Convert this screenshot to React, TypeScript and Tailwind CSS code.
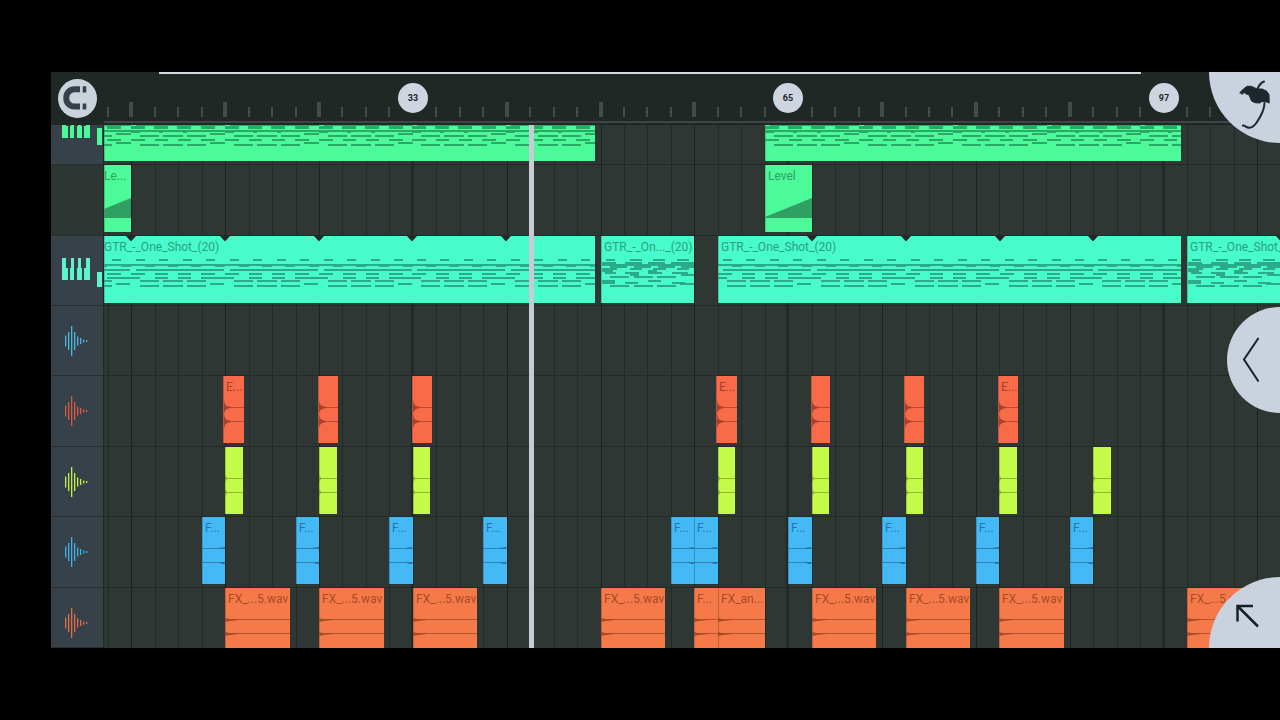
import React from 'react';
import clsx from 'clsx';

type Segment = [x: number, y: number, width: number, height?: number];
type ClipData = { start: number; end: number; label?: string; dense?: boolean };
type TrackKind = 'keys' | 'automation' | 'audio';

type TrackData = {
  name: string;
  kind: TrackKind;
  icon: string;
  clip: string;
  ink: string;
  notes?: Segment[];
  wave?: string;
  meter?: string;
  clips: ClipData[];
};

const BAR_WIDTH = 11.73;
const FIRST_BAR_X = -67;
const LOOP_WIDTH = BAR_WIDTH * 8;
const SONG_END = 115;

const barToX = (bar: number) => Math.ceil(FIRST_BAR_X + (bar - 1) * BAR_WIDTH);

// every second bar, far enough for a very wide window
const GRID_BARS = Array.from({ length: 160 }, (_, i) => 7 + i * 2);

const RISER_NOTES: Segment[] = [
  [5, 30, 89, 2],
  [0, 32, 14, 3],
  [23, 32, 14, 3],
  [46, 32, 14, 3],
  [70, 32, 14, 3],
  [0, 36, 94],
  [0, 38, 9, 1],
  [79, 39, 15],
  [28, 38, 4, 1],
  [52, 38, 4, 1],
  [9, 41, 19],
  [32, 41, 20],
  [56, 41, 19],
  [0, 45, 14],
  [24, 45, 13],
  [47, 45, 13],
  [70, 45, 14],
  [79, 48, 15],
  [9, 50, 19],
  [32, 50, 20],
  [56, 50, 19],
];

const LEAD_NOTES: Segment[] = [
  [5, 23, 9],
  [28, 23, 9],
  [52, 23, 9],
  [75, 23, 9],
  [0, 28, 94],
  [14, 30, 10, 1],
  [37, 30, 10, 1],
  [60, 30, 10, 1],
  [84, 30, 10, 1],
  [5, 33, 88],
  [0, 37, 14],
  [24, 37, 13],
  [47, 37, 13],
  [70, 37, 14],
  [0, 41, 9],
  [24, 41, 13],
  [47, 41, 13],
  [70, 41, 24],
  [9, 44, 19],
  [32, 44, 20],
  [56, 44, 19],
  [79, 47, 14],
  [9, 49, 19],
  [32, 49, 20],
  [56, 49, 19],
];

const DENSE_NOTES: Segment[] = [
  [5, 23, 9],
  [29, 23, 12],
  [52, 23, 12],
  [76, 23, 12],
  [1, 26, 14],
  [24, 26, 17],
  [47, 26, 17],
  [70, 26, 23],
  [1, 28, 93],
  [9, 30, 17],
  [33, 30, 17],
  [57, 30, 17],
  [80, 30, 14],
  [1, 32, 15],
  [29, 32, 12],
  [52, 32, 13],
  [76, 32, 12],
  [1, 34, 11],
  [47, 34, 9],
  [4, 36, 11],
  [24, 36, 14],
  [47, 36, 14],
  [71, 36, 16],
  [29, 38, 9],
  [80, 38, 14],
  [9, 40, 19],
  [33, 40, 19],
  [56, 40, 19],
  [1, 44, 13, 4],
  [47, 44, 13],
  [24, 46, 13],
  [71, 46, 13],
  [79, 47, 15],
  [9, 49, 19],
  [33, 49, 19],
  [56, 49, 19],
];

const every = (bars: number[], length: number, label?: string): ClipData[] =>
  bars.map((start) => ({ start, end: start + length, label }));

const TRACKS: TrackData[] = [
  {
    name: 'Riser',
    kind: 'keys',
    icon: 'text-[#4cfa9a]',
    clip: 'bg-[#4cfa9a]',
    ink: 'text-[#28a061]',
    meter: 'h-[17px]',
    notes: RISER_NOTES,
    clips: [
      { start: 1, end: 48.5 },
      { start: 63, end: 98.5 },
    ],
  },
  {
    name: 'Level',
    kind: 'automation',
    icon: 'text-[#4cfa9a]',
    clip: 'bg-[#4cfa9a]',
    ink: 'text-[#30a062]',
    clips: [
      { start: 5, end: 9, label: 'Le...' },
      { start: 63, end: 67, label: 'Level' },
    ],
  },
  {
    name: 'GTR One Shot',
    kind: 'keys',
    icon: 'text-[#5ff3cc]',
    clip: 'bg-[#47fbcb]',
    ink: 'text-[#29a281]',
    meter: 'h-[15px]',
    notes: LEAD_NOTES,
    clips: [
      { start: 1, end: 48.5, label: 'GTR_-_One_Shot_(20)' },
      { start: 49, end: 57, label: 'GTR_-_On..._(20)', dense: true },
      { start: 59, end: 98.5, label: 'GTR_-_One_Shot_(20)' },
      { start: 99, end: SONG_END, label: 'GTR_-_One_Shot_(20)', dense: true },
    ],
  },
  {
    name: 'Vocal',
    kind: 'audio',
    icon: 'text-[#4cb6da]',
    clip: 'bg-[#43b8f4]',
    ink: 'text-[#1f73a3]',
    clips: [],
  },
  {
    name: 'Crash',
    kind: 'audio',
    icon: 'text-[#dc5740]',
    clip: 'bg-[#f96a49]',
    ink: 'text-[#a3432f]',
    wave: 'M1 24l1 4 2 2 4 1v1l-4 1-2 2-1 3zM1 38l1 4 2 2 4 1v1l-4 1-2 2-1 3z',
    clips: [
      { start: 16.85, end: 18.6, label: 'E...' },
      ...every([24.95, 32.95], 1.65),
      { start: 58.85, end: 60.6, label: 'E...' },
      ...every([66.95, 74.9], 1.65),
      { start: 82.9, end: 84.6, label: 'E...' },
    ],
  },
  {
    name: 'Hit',
    kind: 'audio',
    icon: 'text-[#c0f040]',
    clip: 'bg-[#c3fb48]',
    ink: 'text-[#7fa62d]',
    wave: 'M0 28l2 3v1l-2 3zM0 42l2 3v1l-2 3z',
    clips: every([17, 25, 33, 59, 67, 75, 83, 91], 1.5),
  },
  {
    name: 'Fill',
    kind: 'audio',
    icon: 'text-[#43aee6]',
    clip: 'bg-[#44b9f5]',
    ink: 'text-[#2477a6]',
    wave: 'M16 31l7-1v2h-4zM16 45l7 0v2h-3z',
    clips: every([15, 23, 31, 39, 55, 57, 65, 73, 81, 89], 2, 'F...'),
  },
  {
    name: 'FX',
    kind: 'audio',
    icon: 'text-[#e26a45]',
    clip: 'bg-[#f67a49]',
    ink: 'text-[#a94b26]',
    wave: 'M0 30l4 1h10v1l-9 1-5 1zM0 44l4 1h10v1l-9 1-5 1z',
    clips: [
      ...every([17, 25, 33, 49], 5.5, 'FX_...5.wav'),
      { start: 57, end: 59, label: 'F...' },
      { start: 59, end: 63, label: 'FX_an...' },
      ...every([67, 75, 83, 99], 5.5, 'FX_...5.wav'),
    ],
  },
];

const KeysIcon = () => (
  <svg className="mr-0.5 mb-1" width="28" height="22" viewBox="0 0 28 22" fill="currentColor" shapeRendering="crispEdges">
    <path d="M0 0h4v10h2v12H0zM9 0h3v22H8V10h1zM16 0h3v10h1v12h-5V10h1zM24 0h4v22h-6V10h2z" />
  </svg>
);

const WAVE_BARS = [11, 18, 30, 18, 9, 6, 3, 2];

const WaveIcon = () => (
  <svg width="24" height="30" viewBox="0 0 24 30" fill="currentColor">
    {WAVE_BARS.map((h, i) => (
      <rect key={i} x={i * 3} y={15 - h / 2} width="1.3" height={h} />
    ))}
  </svg>
);

const TrackHeader = ({ track }: { track: TrackData }) => {
  if (track.kind === 'automation') return <div className="h-full bg-[#2e3634]" />;

  return (
    <button
      aria-label={track.name}
      className={clsx('relative flex h-full w-full items-center justify-center bg-[#36414a]', track.icon)}>
      {track.kind === 'keys' ? <KeysIcon /> : <WaveIcon />}
      {track.meter && (
        <span className={clsx('absolute right-px bottom-[19px] w-[5px] bg-current', track.meter)} />
      )}
    </button>
  );
};

const Notes = ({ notes, length, offset }: { notes: Segment[]; length: number; offset: number }) => {
  const loops = Array.from({ length: Math.ceil(length / 8) }, (_, i) => i);
  const loopX = (loop: number) => Math.round(offset + loop * LOOP_WIDTH);
  return (
    <svg className="absolute inset-0 h-full w-full" fill="currentColor">
      {loops.map((loop) => (
        <g key={loop} transform={`translate(${loopX(loop)} 0)`}>
          {notes.map(([x, y, width, height = 2], i) => (
            <rect key={i} x={x} y={y} width={width} height={height} opacity="0.9" />
          ))}
        </g>
      ))}
      {loops.slice(1).map((loop) => (
        <path key={loop} d="M-5 0H5L0.5 5H-0.5Z" fill="#202826" transform={`translate(${loopX(loop)} 0)`} />
      ))}
    </svg>
  );
};

const Ramp = () => (
  <svg className="absolute inset-0 h-full w-full" viewBox="0 0 47 67" preserveAspectRatio="xMaxYMin slice">
    <path d="M0 52L47 33V53H0Z" fill="#2fa062" />
  </svg>
);

const Waveform = ({ shape }: { shape?: string }) => (
  <svg className="absolute inset-0 h-full w-full" fill="currentColor">
    <rect y="31" width="100%" height="1" opacity="0.8" />
    <rect y="45" width="100%" height="1" opacity="0.8" />
    <path d={shape} />
  </svg>
);

const Clip = ({ clip, track }: { clip: ClipData; track: TrackData }) => {
  const start = barToX(clip.start);
  const left = Math.max(start, 0);
  const notes = clip.dense ? DENSE_NOTES : track.notes;

  return (
    <div
      className={clsx(
        'absolute top-0 h-[67px] overflow-hidden shadow-[inset_1px_0_0_rgba(0,0,0,0.2)]',
        track.clip,
        track.ink
      )}
      style={{ left, width: barToX(clip.end) - left }}>
      {notes && <Notes notes={notes} length={clip.end - clip.start} offset={start - left} />}
      {track.kind === 'automation' && <Ramp />}
      {track.kind === 'audio' && <Waveform shape={track.wave} />}
      {clip.label && (
        <span className={clsx('relative block pt-[3px] text-xs leading-4 whitespace-nowrap', start > 0 && 'pl-[3px]')}>
          {clip.label}
        </span>
      )}
    </div>
  );
};

const Ruler = () => (
  <div className="relative h-full flex-1 overflow-hidden">
    {GRID_BARS.map((bar) => {
      const labelled = bar % 32 === 1 && bar < SONG_END;
      return (
        <div
          key={bar}
          className={clsx('absolute flex -translate-x-1/2', labelled ? 'bottom-3' : 'bottom-2')}
          style={{ left: barToX(bar) }}>
          {labelled ? (
            <span className="flex size-[30px] items-center justify-center rounded-full bg-[#ced5e1] pt-px text-[9px] font-bold text-[#1d2629]">
              {bar}
            </span>
          ) : (
            <span className={clsx('bg-[#424b4d]', bar % 8 === 1 ? 'h-[15px] w-1' : 'h-2.5 w-0.5')} />
          )}
        </div>
      );
    })}
    <div className="absolute inset-x-0 bottom-[2px] h-[2px] bg-[#3c4547]" />
  </div>
);

const GridLines = () => (
  <div className="pointer-events-none absolute inset-0 overflow-hidden">
    {GRID_BARS.map((bar) => (
      <div
        key={bar}
        className={clsx(
          'absolute inset-y-0',
          bar % 32 === 1 ? '-ml-0.5 w-[3px] bg-[#222a28]' : 'w-px',
          bar % 32 !== 1 && (bar % 8 === 1 ? 'bg-[#1b2321]' : 'bg-[#232b29]')
        )}
        style={{ left: barToX(bar) }}
      />
    ))}
  </div>
);

const ROWS = 'grid grid-rows-[4fr_7fr_7fr_7fr_7fr_7fr_7fr_6fr]';

const App: React.FC = () => {
  return (
    <div className="h-screen overflow-hidden bg-black py-[72px] pl-[51px] font-['Roboto',sans-serif]">
      <main className="relative flex h-full flex-col overflow-hidden bg-[#2f3735]">
        <header className="flex h-[53px] shrink-0 bg-[#202826]">
          <div className="flex w-[53px] items-center justify-center">
            <button aria-label="Snap to grid" className="size-[39px] rounded-full bg-[#cad2dc]">
              <svg viewBox="0 0 39 39" className="size-full" fill="none" stroke="#36424b">
                <path d="M22 10.3h-5.5a8.2 8.2 0 0 0-8.2 8.2v.9a8.2 8.2 0 0 0 8.2 8.2H22" strokeWidth="6" />
                <path d="M26.5 7.3v6.2M26.5 24.4v6.2" strokeWidth="3.6" />
              </svg>
            </button>
          </div>
          <Ruler />
          <div className="absolute top-0 right-[139px] left-[108px] h-[2px] bg-[#d3d9e4]" />
        </header>

        <div className="flex min-h-0 flex-1">
          <aside className={clsx(ROWS, 'w-[53px] shrink-0 border-r border-[#202826]')}>
            {TRACKS.map((track, i) => (
              <div
                key={track.name}
                className={clsx('flex min-h-0 overflow-hidden border-b border-[#272f33]', i === 0 && 'items-end')}>
                <div className="h-[70px] w-full shrink-0">
                  <TrackHeader track={track} />
                </div>
              </div>
            ))}
          </aside>

          <section className="relative min-w-0 flex-1 overflow-hidden">
            <GridLines />
            <div className={clsx(ROWS, 'relative h-full')}>
              {TRACKS.map((track, i) => (
                <div
                  key={track.name}
                  className={clsx(
                    'flex min-h-0 overflow-hidden border-[#222a28]',
                    i === 0 && 'items-end',
                    i < TRACKS.length - 1 && 'border-b'
                  )}>
                  <div className="relative h-[70px] w-full shrink-0">
                    {track.clips.map((clip) => (
                      <Clip key={clip.start} clip={clip} track={track} />
                    ))}
                  </div>
                </div>
              ))}
            </div>
            <div className="absolute inset-y-0 w-[5px] bg-[#c5ccd6]" style={{ left: barToX(42.9) }} />
          </section>
        </div>

        <button aria-label="Menu" className="absolute top-0 right-0 size-[71px] rounded-bl-full bg-[#cad2e0]">
          <svg viewBox="0 0 71 71" className="size-full" fill="none" stroke="#1e272b" strokeWidth="2" strokeLinecap="round">
            <path d="M55 9.5Q50.5 11.5 48.5 17" />
            <path
              d="M31 20.5L34.5 17L38 14.3L42 14.3L45 15.5L48 17L53 17L57.5 19L60 22.5L60.2 31L57 29.7L53 29.5L50.5 31L46 30.7L42.5 29L41 25L39.5 22.5L36.5 21.8L35.5 20.3L33.5 22Z"
              fill="#1e272b"
              strokeWidth="1"
              strokeLinejoin="round"
            />
            <path d="M55.5 31C55.5 38 52 44 48 50C45 54.5 41 56.5 38 55.3C36 54 35.5 53.5 33.8 53.5" />
          </svg>
        </button>

        <button
          aria-label="Open panel"
          className="absolute top-1/2 right-0 h-[106px] w-[53px] -translate-y-1/2 rounded-l-full bg-[#cad2e0]">
          <svg viewBox="0 0 53 106" className="size-full" fill="none" stroke="#182126" strokeWidth="2">
            <path d="M31.5 31L17 52.5L31.5 74.5" />
          </svg>
        </button>

        <button aria-label="Select tool" className="absolute right-0 bottom-0 size-[71px] rounded-tl-full bg-[#cad2e0]">
          <svg viewBox="0 0 71 71" className="size-full" fill="none" stroke="#182126" strokeWidth="2.5">
            <path d="M44 29H28.5V44.5M28.5 29L49 49.5" />
          </svg>
        </button>
      </main>
    </div>
  );
};

export default App;
